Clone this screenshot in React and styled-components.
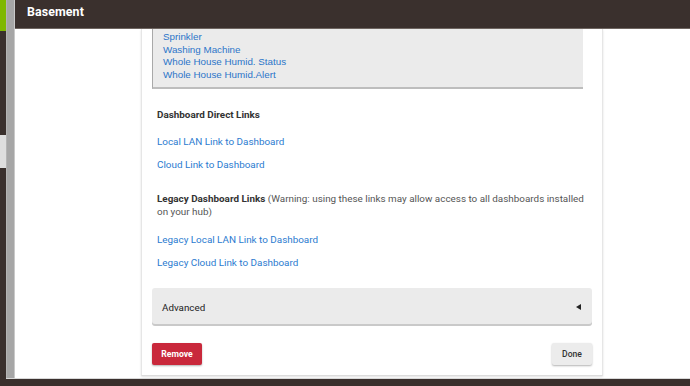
import React from "react";
import styled, { createGlobalStyle } from "styled-components";

const Global = createGlobalStyle`
  html, body { margin: 0; padding: 0; }
  body { width: 690px; height: 386px; overflow: hidden; background: #fff; font-family: Roboto, "Liberation Sans", Arial, sans-serif; }
  * { box-sizing: border-box; }
`;

const Page = styled.div`
  display: flex;
  width: 690px;
  height: 386px;
  background: #3a302d;
`;

const Sidebar = styled.div`
  width: 6px;
  display: flex;
  flex-direction: column;
  background: #3a302d;
`;

const SideBlock = styled.div`
  height: ${(p) => p.$h}px;
  margin-top: ${(p) => p.$mt || 0}px;
  background: ${(p) => p.$c};
`;

const Right = styled.div`
  flex: 1;
  display: flex;
  flex-direction: column;
`;

const Upper = styled.div`
  flex: 1;
  display: flex;
  min-height: 0;
`;

const Strip = styled.div`
  width: 9px;
  background: #a6a6a6;
  border-left: 1px solid #b4b4b4;
  border-right: 1px solid #c9c9c9;
`;

const Main = styled.div`
  flex: 1;
  display: flex;
  flex-direction: column;
  background: #fff;
  min-width: 0;
`;

const Header = styled.div`
  height: 29px;
  background: #3a302d;
  border-bottom: 1px solid #6e6560;
  display: flex;
  align-items: center;
  padding: 0 0 5px 12px;
  color: #fff;
  font-family: Roboto, sans-serif;
  font-weight: 700;
  font-size: 12.4px;
  letter-spacing: 0.1px;
`;

const Content = styled.div`
  flex: 1;
  overflow: hidden;
  padding-left: 126px;
`;

const Card = styled.div`
  width: 462px;
  background: #fff;
  border-left: 1px solid #e6e6e6;
  border-right: 1px solid #e6e6e6;
  border-bottom: 1px solid #dcdcdc;
  box-shadow: 0 1px 2px rgba(0, 0, 0, 0.12);
  padding: 0 10px 10px 10px;
`;

const DeviceList = styled.div`
  width: 431px;
  background: #ebebeb;
  border-left: 1px solid #a9a9a9;
  border-bottom: 2px solid #bdbdbd;
  padding: 2px 10px 5px 10px;
  font-family: "Liberation Sans", Arial, sans-serif;
  font-size: 9.8px;
  line-height: 12.7px;
`;

const ListLink = styled.div`
  color: #2b75c9;
`;

const Section = styled.div`
  padding-left: 5px;
  font-family: Roboto, sans-serif;
  font-size: 9.9px;
  line-height: 13px;
`;

const Heading = styled.div`
  margin-top: ${(p) => p.$mt}px;
  color: #555;
  b { color: #333; font-weight: 700; }
`;

const DashLink = styled.div`
  margin-top: ${(p) => p.$mt}px;
  color: #2b7bd0;
`;

const Advanced = styled.div`
  margin-top: 19px;
  height: 36px;
  background: #ebebeb;
  border-radius: 3px;
  box-shadow: 0 2px 0 #c9c9c9;
  display: flex;
  align-items: center;
  justify-content: space-between;
  padding: 3px 10px 0 10px;
  font-family: Roboto, sans-serif;
  font-size: 9.8px;
  color: #222;
`;

const Arrow = styled.span`
  width: 0;
  height: 0;
  border-top: 3px solid transparent;
  border-bottom: 3px solid transparent;
  border-right: 5px solid #222;
  margin-right: 1px;
`;

const Actions = styled.div`
  margin-top: 19px;
  display: flex;
  justify-content: space-between;
`;

const Button = styled.button`
  height: 22px;
  width: ${(p) => p.$w}px;
  border: none;
  border-radius: 2px;
  padding: 0;
  font-family: Roboto, sans-serif;
  font-size: 8.6px;
  font-weight: ${(p) => (p.$danger ? 700 : 500)};
  color: ${(p) => (p.$danger ? "#fff" : "#333")};
  background: ${(p) => (p.$danger ? "#c9283b" : "#ececec")};
  box-shadow: 0 1px 2px rgba(0, 0, 0, 0.3);
`;

const Bottom = styled.div`
  height: 8px;
  background: #3a302d;
  border-top: 1px solid #d8d8d8;
`;

const devices = [
  "Sprinkler",
  "Washing Machine",
  "Whole House Humid. Status",
  "Whole House Humid.Alert",
];

export default function App() {
  return (
    <>
      <Global />
      <Page>
        <Sidebar>
          <SideBlock $h={31} $c="#7fb800" />
          <SideBlock $h={33} $mt={104} $c="#dedede" />
        </Sidebar>
        <Right>
          <Upper>
            <Strip />
            <Main>
              <Header>Basement</Header>
              <Content>
                <Card>
                  <DeviceList>
                    {devices.map((d) => (
                      <ListLink key={d}>{d}</ListLink>
                    ))}
                  </DeviceList>
                  <Section>
                    <Heading $mt={19}>
                      <b>Dashboard Direct Links</b>
                    </Heading>
                    <DashLink $mt={14}>Local LAN Link to Dashboard</DashLink>
                    <DashLink $mt={10}>Cloud Link to Dashboard</DashLink>
                    <Heading $mt={21}>
                      <b>Legacy Dashboard Links</b> (Warning: using these links may allow access to all dashboards installed on your hub)
                    </Heading>
                    <DashLink $mt={15}>Legacy Local LAN Link to Dashboard</DashLink>
                    <DashLink $mt={10}>Legacy Cloud Link to Dashboard</DashLink>
                  </Section>
                  <Advanced>
                    <span>Advanced</span>
                    <Arrow />
                  </Advanced>
                  <Actions>
                    <Button $danger $w={50}>Remove</Button>
                    <Button $w={40}>Done</Button>
                  </Actions>
                </Card>
              </Content>
            </Main>
          </Upper>
          <Bottom />
        </Right>
      </Page>
    </>
  );
}
